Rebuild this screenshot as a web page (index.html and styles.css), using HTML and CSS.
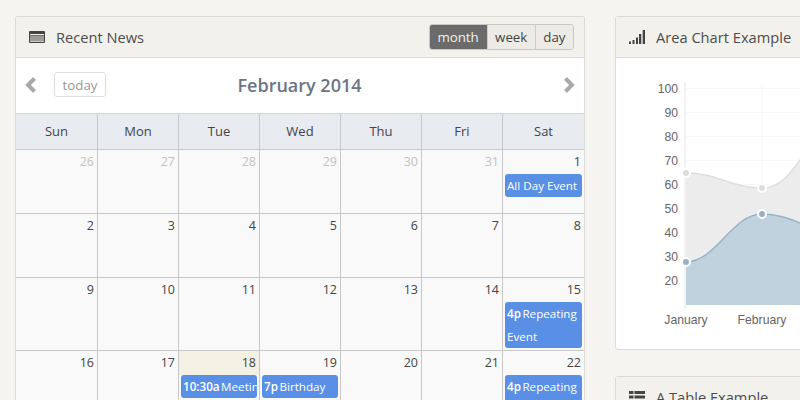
FILE: index.html
```html
<!DOCTYPE html>
<html lang="en">
<head>
<meta charset="utf-8">
<title>Dashboard</title>
<link rel="stylesheet" href="styles.css">
</head>
<body>
<div class="page">
  <section class="panel panel-calendar">
    <header class="panel-head">
      <svg class="head-icon" viewBox="0 0 16 12" width="16" height="12"><path fill="#444" d="M1 0h14a1 1 0 0 1 1 1v10a1 1 0 0 1-1 1H1a1 1 0 0 1-1-1V1a1 1 0 0 1 1-1z"/><path fill="#f3f1ec" d="M1 3h14v1.200H1zM1 5.400h14v1H1zM1 7.500h14v1H1zM1 9.600h14v1.200H1z"/></svg>
      <h2>Recent News</h2>
      <div class="views"><span class="view active">month</span><span class="view">week</span><span class="view">day</span></div>
    </header>
    <div class="toolbar">
      <svg class="chev" viewBox="0 0 12 16" width="12" height="16"><path fill="none" stroke="#a9a9a9" stroke-width="4" d="M9.500 1.500 3 8l6.500 6.500"/></svg>
      <span class="today-btn">today</span>
      <span class="month-title">February 2014</span>
      <svg class="chev" viewBox="0 0 12 16" width="12" height="16"><path fill="none" stroke="#a9a9a9" stroke-width="4" d="M2.500 1.500 9 8l-6.500 6.500"/></svg>
    </div>
    <div class="cal">
      <div class="dow">Sun</div><div class="dow">Mon</div><div class="dow">Tue</div><div class="dow">Wed</div><div class="dow">Thu</div><div class="dow">Fri</div><div class="dow">Sat</div>

      <div class="day off">26</div><div class="day off">27</div><div class="day off">28</div><div class="day off">29</div><div class="day off">30</div><div class="day off">31</div>
      <div class="day">1<div class="event">All Day Event</div></div>

      <div class="day">2</div><div class="day">3</div><div class="day">4</div><div class="day">5</div><div class="day">6</div><div class="day">7</div><div class="day">8</div>

      <div class="day">9</div><div class="day">10</div><div class="day">11</div><div class="day">12</div><div class="day">13</div><div class="day">14</div>
      <div class="day">15<div class="event"><b>4p</b> Repeating Event</div></div>

      <div class="day">16</div><div class="day">17</div>
      <div class="day"><span class="today-num">18</span><div class="event nowrap"><b>10:30a</b> Meeting</div></div>
      <div class="day">19<div class="event nowrap"><b>7p</b> Birthday</div></div>
      <div class="day">20</div><div class="day">21</div>
      <div class="day">22<div class="event"><b>4p</b> Repeating Event</div></div>
    </div>
  </section>

  <div class="side">
    <section class="panel panel-chart">
      <header class="panel-head">
        <svg class="head-icon" viewBox="0 0 16 14" width="16" height="14"><path fill="#444" d="M0 11.500h2V14H0zM3.500 10h2v4h-2zM7 7.500h2V14H7zM10 4h2.300v10H10zM13.700 0H16v14h-2.300z"/></svg>
        <h2>Area Chart Example</h2>
      </header>
      <div class="chart-body">
        <svg class="chart" viewBox="616 58 184 291" width="184" height="291">
          <g stroke="#f7f7f7" stroke-width="1" fill="none">
            <path d="M686 88.500H800M686 112.500H800M686 136.500H800M686 160.500H800M686 184.500H800M686 208.500H800M686 233.500H800M686 257.500H800M686 281.500H800"/>
            <path d="M762 84V305"/>
          </g>
          <path stroke="#f3f3f3" stroke-width="2" fill="none" d="M685 82V309"/>
          <path fill="#ececec" d="M686 305V173C716 173 732 188 762 188C792 188 800 150 838 112V305Z"/>
          <path fill="none" stroke="#dedede" stroke-width="1.500" d="M686 173C716 173 732 188 762 188C792 188 800 150 838 112"/>
          <path fill="#bfd2de" d="M686 305V262C716 262 732 214 762 214C792 214 808 232 838 232V305Z"/>
          <path fill="none" stroke="#94b4c6" stroke-width="1.500" d="M686 262C716 262 732 214 762 214C792 214 808 232 838 232"/>
          <g fill="#dcdcdc" stroke="#fff" stroke-width="2"><circle cx="686" cy="173" r="4"/><circle cx="762" cy="188" r="4"/></g>
          <g fill="#94b4c6" stroke="#fff" stroke-width="2"><circle cx="686" cy="262" r="4"/><circle cx="762" cy="214" r="4"/></g>
          <g class="tick" text-anchor="end">
            <text x="678" y="93">100</text><text x="678" y="117">90</text><text x="678" y="141">80</text><text x="678" y="165">70</text><text x="678" y="189">60</text><text x="678" y="213">50</text><text x="678" y="237">40</text><text x="678" y="261">30</text><text x="678" y="285">20</text>
          </g>
          <g class="tick" text-anchor="middle">
            <text x="686" y="324">January</text><text x="762" y="324">February</text>
          </g>
        </svg>
      </div>
    </section>
    <section class="panel panel-table">
      <header class="panel-head">
        <svg class="head-icon" viewBox="0 0 16 12" width="16" height="12"><path fill="#444" d="M0 0h4.500v3H0zM5.500 0H16v3H5.500zM0 4.500h4.500v3H0zM5.500 4.500H16v3H5.500zM0 9h4.500v3H0zM5.500 9H16v3H5.500z"/></svg>
        <h2>A Table Example</h2>
      </header>
    </section>
  </div>
</div>
</body>
</html>
```

FILE: styles.css
```css
* { box-sizing: border-box; }
html, body { margin: 0; height: 400px; overflow: hidden; }
body { background: #f6f4f0; font-family: "Open Sans", sans-serif; color: #444; }
.page { display: flex; align-items: flex-start; gap: 30px; padding: 16px 0 0 15px; width: 800px; }
.panel { background: #fff; border: 1px solid #dcdad4; border-radius: 3px; }
.panel-calendar { width: 570px; flex: none; border-bottom: 0; border-radius: 3px 3px 0 0; }
.side { width: 200px; flex: none; display: flex; flex-direction: column; gap: 26px; }
.panel-chart { width: 230px; height: 334px; }
.panel-table { width: 230px; }
.panel-head { display: flex; align-items: center; height: 41px; padding: 0 10px 0 13px; background: #f3f1ec; border-bottom: 1px solid #dcdad4; }
.panel-head h2 { margin: 0 0 0 11px; font-size: 14.65px; font-weight: 400; color: #4c4c4c; white-space: nowrap; }
.views { margin-left: auto; display: flex; height: 26px; margin-bottom: 1px; border: 1px solid #c9c7c2; border-radius: 3px; }
.view { display: flex; align-items: center; padding: 0 7.5px; font-size: 13.3px; color: #444; background: #ecebe6; border-left: 1px solid #cfcdc8; }
.view:first-child { border-left: 0; }
.view.active { background: #6b6b6b; color: #f0f0f0; width: 57px; justify-content: center; padding: 0; border-radius: 2px 0 0 2px; }
.toolbar { display: flex; align-items: center; height: 55px; padding: 0 9px 1px; }
.today-btn { margin-left: 17px; width: 52px; height: 25px; margin-bottom: 1px; display: flex; align-items: center; justify-content: center; font-size: 13.3px; color: #999; border: 1px solid #ddd; border-radius: 3px; }
.month-title { flex: 1; text-align: center; font-size: 18px; font-weight: 600; color: #6b7585; padding-right: 70px; margin-bottom: 1px; }
.cal { display: grid; grid-template-columns: repeat(6, 81px) 82px; grid-template-rows: 36px 64px 64px 73px 50px; background: #f9f9f9; border-top: 1px solid #d5d5d5; }
.dow { display: flex; align-items: center; justify-content: center; padding-bottom: 1px; font-size: 13px; font-weight: 400; color: #444; background: #e8ebf0; border-left: 1px solid #c8c8c8; border-bottom: 1px solid #c8c8c8; }
.day { position: relative; padding: 4px 3px 0 2px; text-align: right; font-size: 12.5px; line-height: 16px; color: #444; border-left: 1px solid #c8c8c8; border-bottom: 1px solid #c8c8c8; }
.dow:nth-child(7n+1), .day:nth-child(7n+1) { border-left: 0; }
.day.off { color: #c2c2c2; }
.today-num { display: block; margin: -4px -3px 0 -2px; padding: 4px 3px 4px 0; height: 24px; background: #f3f1e4; }
.event { margin: 4px -1px 0 0; text-align: left; padding: 0 2px; background: #5a8fe6; color: #fff; font-size: 11.65px; line-height: 23px; border-radius: 3px; }
.event b { font-weight: 600; margin-right: -1.5px; }
.day > .today-num + .event { margin-top: 0; }
.nowrap { white-space: nowrap; overflow: hidden; }
.chart-body { height: 291px; overflow: hidden; }
.chart { display: block; }
.tick { font-family: "Liberation Sans", sans-serif; font-size: 12.2px; fill: #666; }
```
